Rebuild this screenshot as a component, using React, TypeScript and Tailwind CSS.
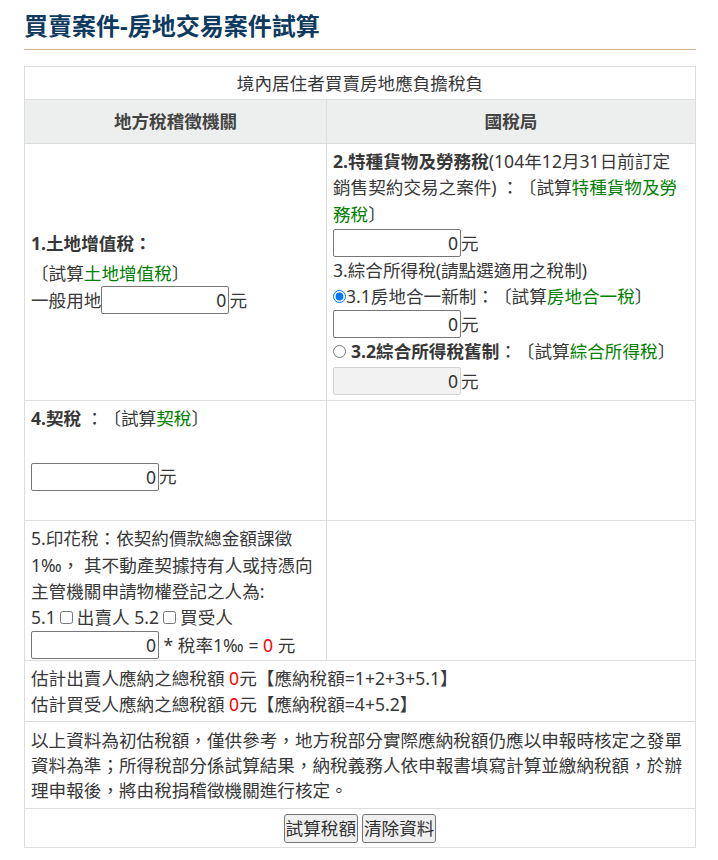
import React from 'react';

function Amount({ disabled }: { disabled?: boolean }) {
  return (
    <input
      type="text"
      defaultValue="0"
      disabled={disabled}
      className={`box-border h-[28px] w-[128px] rounded-[2px] border px-[2px] text-right text-[17.6px] text-[#333] outline-none ${
        disabled ? 'border-[#d3d3d3] bg-[#f2f2f2]' : 'border-[#767676] bg-white'
      }`}
    />
  );
}

function Calc({ label }: { label: string }) {
  return (
    <span>
      〔試算<span className="text-[#008000]">{label}</span>〕
    </span>
  );
}

export default function App() {
  const cell = 'border border-[#dddddd] px-[6px]';

  return (
    <div className="min-h-[860px] bg-white font-['Noto_Sans','Noto_Sans_CJK_TC',sans-serif] text-[#383838] [text-spacing-trim:space-all]">
      <div className="ml-[24px] w-[672px]">
        <h1 className="pt-[10px] text-[24px] font-bold leading-[32px] text-[#0f3a5f]">
          買賣案件-房地交易案件試算
        </h1>
        <div className="mt-[7px] h-px bg-[#d8b493]" />

        <table className="mt-[16px] w-full table-fixed border-collapse text-[17.6px] leading-[26.4px]">
          <colgroup>
            <col className="w-[302px]" />
            <col />
          </colgroup>
          <tbody>
            <tr>
              <td colSpan={2} className={`${cell} py-[3px] text-center`}>
                境內居住者買賣房地應負擔稅負
              </td>
            </tr>
            <tr className="bg-[#edefee]">
              <th className={`${cell} py-[8px] text-center font-bold text-[#444]`}>地方稅稽徵機關</th>
              <th className={`${cell} py-[8px] text-center font-bold text-[#444]`}>國稅局</th>
            </tr>

            <tr>
              <td className={`${cell} align-middle`}>
                <div className="mb-[3px] font-bold">1.土地增值稅：</div>
                <div>
                  <Calc label="土地增值稅" />
                </div>
                <div className="flex h-[28px] items-center">
                  一般用地
                  <Amount />元
                </div>
              </td>
              <td className={`${cell} pt-[4px] pb-[5px] align-top`}>
                <div className="whitespace-nowrap">
                  <b>2.特種貨物及勞務稅</b>(104年12月31日前訂定
                  <br />
                  銷售契約交易之案件) ：〔試算<span className="text-[#008000]">特種貨物及勞</span>
                  <br />
                  <span className="text-[#008000]">務稅</span>〕
                </div>
                <div className="mt-[2px] flex h-[28px] items-center">
                  <Amount />元
                </div>
                <div>3.綜合所得稅(請點選適用之稅制)</div>
                <label className="flex items-center whitespace-nowrap">
                  <input type="radio" name="tax" defaultChecked className="m-0 h-[13px] w-[13px]" />
                  3.1房地合一新制：
                  <Calc label="房地合一稅" />
                </label>
                <div className="flex h-[28px] items-center">
                  <Amount />元
                </div>
                <label className="flex items-center whitespace-nowrap">
                  <input type="radio" name="tax" className="m-0 mr-[5px] h-[13px] w-[13px]" />
                  <b>3.2綜合所得稅舊制</b>：
                  <Calc label="綜合所得稅" />
                </label>
                <div className="mt-[3px] flex h-[28px] items-center">
                  <Amount disabled />元
                </div>
              </td>
            </tr>

            <tr>
              <td className={`${cell} h-[120px] pt-[4px] align-top`}>
                <div>
                  <b>4.契稅</b> ：<Calc label="契稅" />
                </div>
                <div className="mt-[31px] flex h-[28px] items-center">
                  <Amount />元
                </div>
              </td>
              <td className={cell} />
            </tr>

            <tr>
              <td className={`${cell} pt-[4px] pb-[1px] align-top`}>
                <div className="whitespace-nowrap">
                  5.印花稅：依契約價款總金額課徵
                  <br />
                  1‰， 其不動產契據持有人或持憑向
                  <br />
                  主管機關申請物權登記之人為:
                </div>
                <div className="flex items-center">
                  5.1
                  <input type="checkbox" className="mx-[4px] h-[13px] w-[13px]" />
                  出賣人 5.2
                  <input type="checkbox" className="mx-[4px] h-[13px] w-[13px]" />
                  買受人
                </div>
                <div className="flex h-[28px] items-center whitespace-pre">
                  <Amount /> * 稅率1‰ = <span className="text-[#ff0000]">0</span> 元
                </div>
              </td>
              <td className={cell} />
            </tr>

            <tr>
              <td colSpan={2} className={`${cell} pt-[4px] pb-[3px]`}>
                <div>
                  估計出賣人應納之總稅額 <span className="text-[#ff0000]">0</span>元【應納稅額=1+2+3+5.1】
                </div>
                <div>
                  估計買受人應納之總稅額 <span className="text-[#ff0000]">0</span>元【應納稅額=4+5.2】
                </div>
              </td>
            </tr>

            <tr>
              <td colSpan={2} className={`${cell} pt-[6px] pb-[5px] leading-[25px]`}>
                以上資料為初估稅額，僅供參考，地方稅部分實際應納稅額仍應以申報時核定之發單
                <br />
                資料為準；所得稅部分係試算結果，納稅義務人依申報書填寫計算並繳納稅額，於辦
                <br />
                理申報後，將由稅捐稽徵機關進行核定。
              </td>
            </tr>

            <tr>
              <td colSpan={2} className={`${cell} pt-[5px] pb-[4px] text-center`}>
                <div className="flex justify-center gap-[4px]">
                  <button className="h-[29px] rounded-[3px] border border-[#767676] bg-[#efefef] px-[1px] text-[17.6px] leading-[25px] text-[#333]">
                    試算稅額
                  </button>
                  <button className="h-[29px] rounded-[3px] border border-[#767676] bg-[#efefef] px-[1px] text-[17.6px] leading-[25px] text-[#333]">
                    清除資料
                  </button>
                </div>
              </td>
            </tr>
          </tbody>
        </table>
      </div>
    </div>
  );
}
